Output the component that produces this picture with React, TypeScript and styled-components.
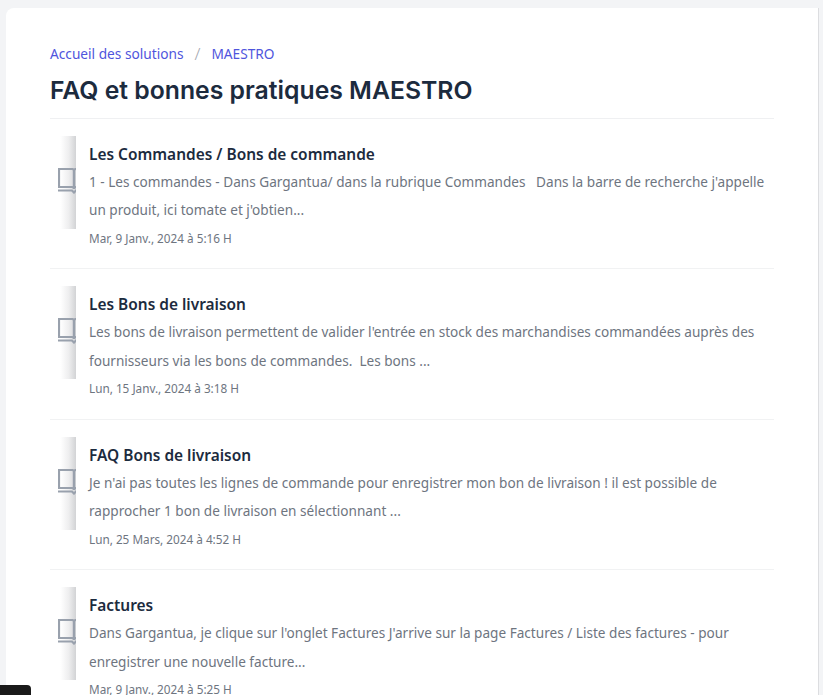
import React from "react";
import styled, { createGlobalStyle } from "styled-components";

const Global = createGlobalStyle`
  html, body { margin: 0; padding: 0; height: 100%; overflow: hidden; background: #f3f4f6; }
  #root { height: 100%; }
`;

const Page = styled.div`
  height: 695px;
  overflow: hidden;
  padding: 8px 4px 0 6px;
  box-sizing: border-box;
`;

const Card = styled.main`
  background: #fff;
  border-right: 1px solid #dcdde0;
  border-radius: 8px 0 0 0;
  padding: 35px 44px 0 44px;
  height: 800px;
  font-family: "Noto Sans", sans-serif;
`;

const Crumbs = styled.nav`
  display: flex;
  align-items: center;
  height: 20px;
  font-size: 13.7px;
  color: #4f55dd;
`;

const Slash = styled.span`
  color: #a3a8b0;
  font-size: 17px;
  font-weight: 300;
  margin: 0 11px;
`;

const Title = styled.h1`
  margin: 8px 0 0;
  height: 48px;
  line-height: 38px;
  font-family: "Inter", sans-serif;
  font-weight: 600;
  font-size: 24.75px;
  color: #1c2b3e;
  border-bottom: 1px solid #eff0f2;
  box-sizing: border-box;
`;

const Item = styled.article`
  display: flex;
  gap: 13px;
  height: 150.45px;
  padding-top: 17px;
  box-sizing: border-box;
  border-bottom: 1px solid #f1f2f3;
`;

const Thumb = styled.div`
  flex: none;
  width: 26px;
  height: 93px;
  overflow: hidden;
  display: flex;
  align-items: center;
  padding-left: 8px;
  box-sizing: border-box;
  background: linear-gradient(to right, #ffffff 40%, #eeeeef 72%, #d2d3d5 100%);
  color: #99a1ad;
`;

const Body = styled.div`
  min-width: 0;
`;

const ItemTitle = styled.h2`
  margin: 7px 0 3px;
  font-size: 15.45px;
  line-height: 22px;
  font-weight: 600;
  color: #1c2b3e;
`;

const Excerpt = styled.p`
  margin: 0;
  font-size: 13.6px;
  line-height: 28.4px;
  color: #6e757f;
  white-space: pre-wrap;
`;

const Stamp = styled.div`
  font-size: 11.75px;
  line-height: 18px;
  margin-top: 4px;
  color: #6e757f;
`;

const Badge = styled.div`
  position: fixed;
  left: 0;
  bottom: 0;
  width: 31px;
  height: 10px;
  background: #1a1a1a;
  border-radius: 0 4px 0 0;
`;

const Book = () => (
  <svg width="32" height="26" viewBox="0 0 32 26" fill="none" stroke="currentColor" strokeWidth="2.2" style={{ flex: "none", marginTop: -3 }}>
    <path d="M1 1h13c1 0 2 1 2 2v18c0-1-1-2-2-2H1z" />
    <path d="M31 1H18c-1 0-2 1-2 2v18c0-1 1-2 2-2h13z" />
    <path d="M0 22.500h14l2 2 2-2h14" />
  </svg>
);

const items = [
  ["Les Commandes / Bons de commande", "1 - Les commandes - Dans Gargantua/ dans la rubrique Commandes   Dans la barre de recherche j'appelle un produit, ici tomate et j'obtien...", "Mar, 9 Janv., 2024 à 5:16 H"],
  ["Les Bons de livraison", "Les bons de livraison permettent de valider l'entrée en stock des marchandises commandées auprès des fournisseurs via les bons de commandes.  Les bons ...", "Lun, 15 Janv., 2024 à 3:18 H"],
  ["FAQ Bons de livraison", "Je n'ai pas toutes les lignes de commande pour enregistrer mon bon de livraison ! il est possible de rapprocher 1 bon de livraison en sélectionnant ...", "Lun, 25 Mars, 2024 à 4:52 H"],
  ["Factures", "Dans Gargantua, je clique sur l'onglet Factures J'arrive sur la page Factures / Liste des factures - pour enregistrer une nouvelle facture...", "Mar, 9 Janv., 2024 à 5:25 H"],
];

export default function App() {
  return (
    <Page>
      <Global />
      <Card>
        <Crumbs>
          Accueil des solutions<Slash>/</Slash>MAESTRO
        </Crumbs>
        <Title>FAQ et bonnes pratiques MAESTRO</Title>
        {items.map(([t, e, s]) => (
          <Item key={t}>
            <Thumb><Book /></Thumb>
            <Body>
              <ItemTitle>{t}</ItemTitle>
              <Excerpt>{e}</Excerpt>
              <Stamp>{s}</Stamp>
            </Body>
          </Item>
        ))}
      </Card>
      <Badge />
    </Page>
  );
}
